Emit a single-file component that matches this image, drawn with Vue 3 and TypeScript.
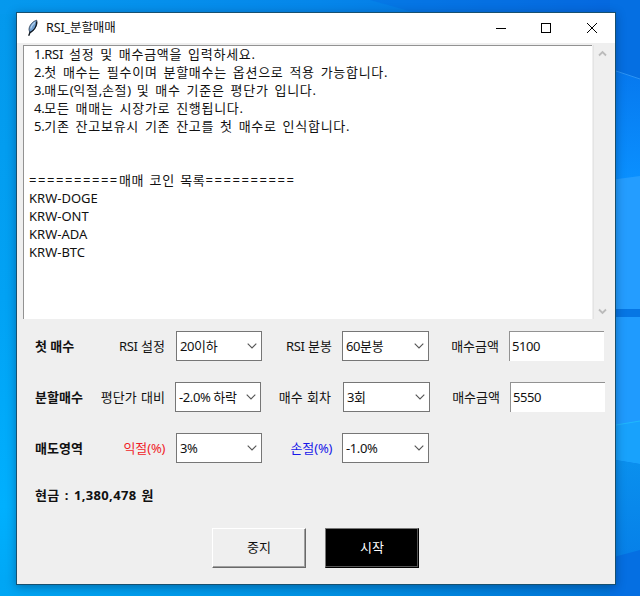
<script setup lang="ts">
import { ref } from 'vue'

interface Field {
  label: string
  value: string
  kind: 'combo' | 'entry'
  tone?: 'gain' | 'loss'
}
interface Row {
  title: string
  id: string
  fields: Field[]
}

const logLines: { text: string; kind: string }[] = [
  { text: '1.RSI 설정 및 매수금액을 입력하세요.', kind: 'guide' },
  { text: '2.첫 매수는 필수이며 분할매수는 옵션으로 적용 가능합니다.', kind: 'guide' },
  { text: '3.매도(익절,손절) 및 매수 기준은 평단가 입니다.', kind: 'guide' },
  { text: '4.모든 매매는 시장가로 진행됩니다.', kind: 'guide' },
  { text: '5.기존 잔고보유시 기존 잔고를 첫 매수로 인식합니다.', kind: 'guide' },
  { text: '', kind: 'blank' },
  { text: '', kind: 'blank' },
  { text: '==========매매 코인 목록==========', kind: 'divider' },
  { text: 'KRW-DOGE', kind: 'coin' },
  { text: 'KRW-ONT', kind: 'coin' },
  { text: 'KRW-ADA', kind: 'coin' },
  { text: 'KRW-BTC', kind: 'coin' },
]

// Hangul runs and Latin runs are tracked differently, so each line is split into runs.
function runs(text: string): { text: string; script: string }[] {
  return (text.match(/[가-힣 ]+|[^가-힣 ]+/g) ?? []).map((t) => ({
    text: t,
    script: /[가-힣 ]/.test(t) ? 'ko' : t.startsWith('=') ? 'rule' : 'latin',
  }))
}

const rows = ref<Row[]>([
  {
    title: '첫 매수',
    id: 'first',
    fields: [
      { label: 'RSI 설정', value: '20이하', kind: 'combo' },
      { label: 'RSI 분봉', value: '60분봉', kind: 'combo' },
      { label: '매수금액', value: '5100', kind: 'entry' },
    ],
  },
  {
    title: '분할매수',
    id: 'split',
    fields: [
      { label: '평단가 대비', value: '-2.0% 하락', kind: 'combo' },
      { label: '매수 회차', value: '3회', kind: 'combo' },
      { label: '매수금액', value: '5550', kind: 'entry' },
    ],
  },
  {
    title: '매도영역',
    id: 'sell',
    fields: [
      { label: '익절(%)', value: '3%', kind: 'combo', tone: 'gain' },
      { label: '손절(%)', value: '-1.0%', kind: 'combo', tone: 'loss' },
    ],
  },
])
</script>

<template>
  <main class="desktop">
    <svg class="wallpaper" viewBox="0 0 640 596" aria-hidden="true">
      <defs>
        <linearGradient id="left" x1="0" y1="0" x2="0" y2="1">
          <stop offset="0" stop-color="#0498ec" />
          <stop offset="0.5" stop-color="#02a2f4" />
          <stop offset="0.85" stop-color="#00b0fe" />
          <stop offset="1" stop-color="#00a6f4" />
        </linearGradient>
        <linearGradient id="top" x1="0" y1="0" x2="1" y2="0">
          <stop offset="0" stop-color="#0599ee" />
          <stop offset="0.5" stop-color="#0586ea" />
          <stop offset="1" stop-color="#0567de" />
        </linearGradient>
        <linearGradient id="bottom" x1="0" y1="0" x2="1" y2="0">
          <stop offset="0" stop-color="#00a6f4" />
          <stop offset="0.5" stop-color="#0092e4" />
          <stop offset="1" stop-color="#0072d8" />
        </linearGradient>
        <linearGradient id="upper" x1="0" y1="0" x2="0" y2="1">
          <stop offset="0" stop-color="#0678ee" />
          <stop offset="1" stop-color="#0a90ff" />
        </linearGradient>
        <linearGradient id="lower" x1="0" y1="0" x2="0" y2="1">
          <stop offset="0" stop-color="#0a90ee" />
          <stop offset="1" stop-color="#0680e8" />
        </linearGradient>
      </defs>
      <rect width="640" height="596" fill="url(#left)" />
      <rect width="640" height="14" fill="url(#top)" />
      <rect y="580" width="640" height="16" fill="url(#bottom)" />
      <path d="M370 0L420 14H640V0Z" fill="#0668e0" opacity=".35" />
      <rect x="610" width="30" height="596" fill="#056fe2" />
      <path d="M610 69L640 79V180H610Z" fill="url(#upper)" />
      <path d="M610 69L640 79" stroke="#2c93f4" />
      <path d="M610 180L640 176V309H610Z" fill="#249dff" />
      <path d="M610 309H640V317H610Z" fill="#0676e4" />
      <path d="M610 317H640V464L610 459Z" fill="#1f9bfe" />
      <path d="M610 426L640 421V464L610 459Z" fill="#18a2fc" />
      <path d="M610 426L640 421" stroke="#20b8fc" />
      <path d="M610 459L640 464V550L610 558Z" fill="url(#lower)" />
    </svg>

    <section class="window">
      <header class="titlebar">
        <svg class="feather" viewBox="0 0 16 18" aria-hidden="true">
          <path d="M11.7 1.2C8 2.2 4.2 6 4 10.5L4.8 13.8C8.2 12.5 11.6 8 12 4.5Z" fill="#6f9fd0" stroke="#25364c" stroke-width=".8" />
          <path d="M11.6 2.6C11.8 7 9 11.5 5 13.6L3.7 16.8" fill="none" stroke="#101820" stroke-width="1.4" />
          <path d="M10 3.3C8 5 6.3 7 5.7 9.6" fill="none" stroke="#b5d2ee" stroke-width="1.2" />
        </svg>
        <h1>RSI_분할매매</h1>
        <svg class="controls" viewBox="0 0 110 16" aria-hidden="true" shape-rendering="crispEdges">
          <path d="M3 8.5H13" />
          <rect x="48.5" y="3.5" width="9" height="9" />
          <path d="M94 3L104 13M104 3L94 13" shape-rendering="auto" />
        </svg>
      </header>

      <div class="log-frame">
        <div class="log">
          <p v-for="(line, i) in logLines" :key="i" :class="line.kind"><span v-for="(run, j) in runs(line.text)" :key="j" :class="run.script">{{ run.text }}</span></p>
        </div>
        <div class="scrollbar">
          <svg viewBox="0 0 9 7"><path d="M1 5.5L4.5 2L8 5.5" /></svg>
          <svg viewBox="0 0 9 7"><path d="M1 1.5L4.5 5L8 1.5" /></svg>
        </div>
      </div>

      <div class="form">
        <div v-for="row in rows" :key="row.id" class="row" :class="row.id">
          <strong>{{ row.title }}</strong>
          <template v-for="(f, i) in row.fields" :key="i">
            <label :class="f.tone"><span v-for="(run, j) in runs(f.label)" :key="j" :class="run.script">{{ run.text }}</span></label>
            <div :class="f.kind">
              <span>{{ f.value }}</span>
              <svg v-if="f.kind === 'combo'" viewBox="0 0 10 6"><path d="M.7.7L5 5L9.3.7" /></svg>
            </div>
          </template>
        </div>
        <p class="cash">현금 : 1,380,478 원</p>
      </div>

      <footer class="actions">
        <button class="stop" type="button">중지</button>
        <button class="start" type="button">시작</button>
      </footer>
    </section>
  </main>
</template>

<style>
body { margin: 0; overflow: hidden; }
</style>

<style scoped>
* { box-sizing: border-box; }
.desktop {
  position: relative;
  width: 640px;
  height: 596px;
  padding: 12px 0 0 16px;
  overflow: hidden;
  font: 13px/18px "Noto Sans", "Noto Sans CJK KR", sans-serif;
  color: #111;
  white-space: pre;
}
.wallpaper { position: absolute; inset: 0; width: 640px; height: 596px; }
.window {
  position: relative;
  width: 600px;
  height: 573px;
  border: 1px solid #17506f;
  background: #efefef;
  box-shadow: 0 2px 9px rgba(0, 25, 60, .38);
}
.titlebar { display: flex; align-items: center; height: 30px; padding: 0 12px 0 8px; background: #fff; }
.feather { width: 16px; height: 18px; }
h1 { flex: 1; margin: 0 0 0 5px; font-size: 12.5px; font-weight: 400; letter-spacing: -.1px; }
.controls { width: 110px; height: 16px; fill: none; stroke: #000; stroke-width: 1; }
.log-frame { display: flex; width: 586px; height: 274px; margin: 2px 0 0 6px; }
.log { width: 569px; border-top: 1px solid #929292; border-left: 1px solid #929292; background: #fff; padding-left: 5px; }
p { margin: 0; height: 18px; }
.log p:first-child { margin-top: -1px; }
.guide { padding-left: 5px; }
.guide .ko, .divider .ko { letter-spacing: .72px; word-spacing: 1.8px; }
.guide .latin { letter-spacing: -.3px; }
.divider .ko { word-spacing: 1.2px; }
.divider .rule { letter-spacing: 1.55px; }
.coin { letter-spacing: 0; }
.scrollbar { display: flex; flex-direction: column; justify-content: space-between; flex: 1; padding: 5px 0 4px 4px; border-left: 1px solid #e4e4e4; margin-left: 1px; }
.scrollbar svg { width: 9px; height: 7px; fill: none; stroke: #bbb; stroke-width: 1.8; }
.form { padding: 12px 0 0 18px; }
.row { display: grid; grid-template-columns: 60px 70px 11px 86px 70px 10px 87px 70px 10px 95px; height: 30px; margin-bottom: 21px; align-items: center; }
.row strong { grid-column: 1; }
.row label { text-align: right; }
.row label .latin { letter-spacing: -.3px; }
.row label:nth-of-type(1) { grid-column: 2; }
.row label:nth-of-type(2) { grid-column: 5; }
.row label:nth-of-type(3) { grid-column: 8; }
.row div:nth-of-type(1) { grid-column: 4; }
.row div:nth-of-type(2) { grid-column: 7; }
.row div:nth-of-type(3) { grid-column: 10; }
.row.split { grid-template-columns: 60px 70px 10px 86px 70px 12px 87px 70px 10px 95px; }
.split label { word-spacing: 1px; }
.gain { color: #f01c28; }
.loss { color: #1818e8; }
.combo, .entry { display: flex; align-items: center; justify-content: space-between; height: 30px; background: #fff; letter-spacing: -.4px; }
.combo { border: 1px solid #767676; padding: 0 4px 0 3px; }
.combo svg { width: 10px; height: 6px; fill: none; stroke: #555; stroke-width: 1.1; }
.combo { padding-bottom: 1px; }
.entry { border-top: 1px solid #929292; border-left: 1px solid #929292; padding: 0 0 2px 2px; }
.cash { font-weight: 700; margin-top: 23px; letter-spacing: .35px; word-spacing: 1.4px; }
.actions { display: flex; gap: 19px; margin: 24px 0 0 195px; }
button { width: 94px; height: 40px; padding: 0 0 2px; font: inherit; border: 1px solid; border-radius: 0; }
.stop { color: #111; background: #efefef; border-color: #fff #696969 #696969 #fff; box-shadow: inset -1px -1px #a0a0a0; }
.start { color: #fff; background: #000; border-color: #777 #000 #000 #777; box-shadow: inset -1px -1px #555; }
</style>
